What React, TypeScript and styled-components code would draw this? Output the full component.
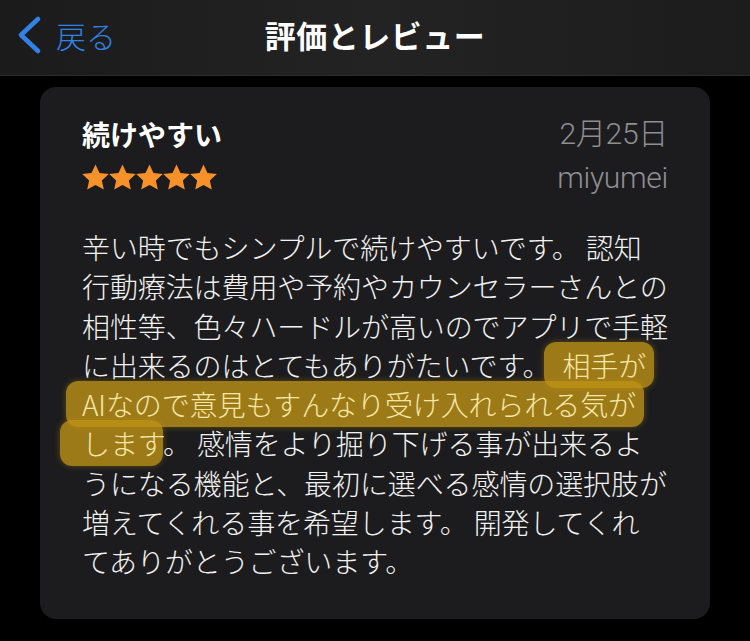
import styled, { createGlobalStyle } from 'styled-components';
import { ReactElement } from 'react';

const GlobalStyle = createGlobalStyle`
  html, body {
    margin: 0;
    padding: 0;
    background: #000;
  }
  body {
    font-family: 'Noto Sans CJK JP', 'Noto Sans', sans-serif;
    -webkit-font-smoothing: antialiased;
  }
`;

const Screen = styled.div`
  width: 750px;
  height: 641px;
  background: #000;
  overflow: hidden;
`;

const NavBar = styled.header`
  height: 76px;
  display: grid;
  grid-template-columns: 1fr auto 1fr;
  align-items: center;
  padding: 0 16px 0 16px;
  background: linear-gradient(90deg, #1b1b1b 0%, #232323 50%, #1c1c1c 100%);
  border-bottom: 1px solid #2b2b2b;
  box-sizing: border-box;
`;

const BackButton = styled.button`
  justify-self: start;
  display: flex;
  align-items: center;
  gap: 12px;
  background: none;
  border: 0;
  padding: 0;
  margin-top: -6px;
  color: #3182e6;
  font-family: inherit;
  font-size: 30px;
  font-weight: 300;
  cursor: pointer;
`;

const NavTitle = styled.h1`
  margin: -6px 0 0;
  color: #fff;
  font-size: 31px;
  font-weight: 700;
  letter-spacing: 0.5px;
`;

const Card = styled.article`
  margin: 11px 40px 0;
  height: 532px;
  box-sizing: border-box;
  padding: 28px 42px;
  background: #1c1c1e;
  border-radius: 16px;
`;

const CardHead = styled.div`
  display: flex;
  justify-content: space-between;
`;

const Column = styled.div<{ $align?: 'start' | 'end' }>`
  display: flex;
  flex-direction: column;
  align-items: ${({ $align }) => ($align === 'end' ? 'flex-end' : 'flex-start')};
`;

const ReviewTitle = styled.h2`
  margin: 0;
  line-height: 38px;
  font-size: 28px;
  font-weight: 700;
  color: #fff;
`;

const Stars = styled.div`
  display: flex;
  margin-top: 11px;
  height: 26px;
`;

const Meta = styled.span<{ $gap?: number }>`
  line-height: 38px;
  margin-top: ${({ $gap }) => $gap ?? 0}px;
  font-family: 'Roboto', 'Noto Sans CJK JP', sans-serif;
  font-size: 30px;
  font-weight: 300;
  letter-spacing: -0.3px;
  color: #8e8e93;
`;

const Body = styled.div`
  margin-top: 31px;
  color: #f2f2f2;
  font-size: 28px;
  font-weight: 300;
  line-height: 39.25px;
  letter-spacing: -0.1px;
`;

const Line = styled.div`
  white-space: nowrap;
`;

const Mark = styled.span<{ $padL: number; $padR: number }>`
  background: rgba(190, 146, 22, 0.8);
  color: #f6e7a6;
  border-radius: 12px;
  padding: 3px ${({ $padR }) => $padR}px 3px ${({ $padL }) => $padL}px;
  margin: 0 ${({ $padR }) => -$padR}px 0 ${({ $padL }) => -$padL}px;
  box-shadow: 0 0 6px rgba(190, 146, 22, 0.4);
`;

const Gap = styled.span<{ $w: number }>`
  display: inline-block;
  width: ${({ $w }) => $w}px;
`;

function Star(): ReactElement {
  return (
    <svg width="27" height="26" viewBox="1.6 1.6 20.8 19.8">
      <path
        d="M12 1.8l3.05 6.6 7.2.8-5.35 4.9 1.5 7.1L12 17.6l-6.4 3.6 1.5-7.1L1.75 9.2l7.2-.8z"
        fill="#f7922b"
      />
    </svg>
  );
}

function Chevron(): ReactElement {
  return (
    <svg width="28" height="40" viewBox="0 0 28 40">
      <path
        d="M22 4L5 20l17 16"
        fill="none"
        stroke="#3182e6"
        strokeWidth="4.6"
        strokeLinecap="round"
        strokeLinejoin="round"
      />
    </svg>
  );
}

export default function App(): ReactElement {
  return (
    <Screen>
      <GlobalStyle />
      <NavBar>
        <BackButton>
          <Chevron />
          戻る
        </BackButton>
        <NavTitle>評価とレビュー</NavTitle>
        <span />
      </NavBar>
      <Card>
        <CardHead>
          <Column>
            <ReviewTitle>続けやすい</ReviewTitle>
            <Stars>
              {[0, 1, 2, 3, 4].map((i) => (
                <Star key={i} />
              ))}
            </Stars>
          </Column>
          <Column $align="end">
            <Meta>2月25日</Meta>
            <Meta $gap={6}>miyumei</Meta>
          </Column>
        </CardHead>
        <Body>
          <Line>辛い時でもシンプルで続けやすいです。 認知</Line>
          <Line>行動療法は費用や予約やカウンセラーさんとの</Line>
          <Line>相性等、色々ハードルが高いのでアプリで手軽</Line>
          <Line>
            に出来るのはとてもありがたいです。<Gap $w={12} />
            <Mark $padL={18} $padR={8}>相手が</Mark>
          </Line>
          <Line>
            <Mark $padL={16} $padR={8}>AIなので意見もすんなり受け入れられる気が</Mark>
          </Line>
          <Line>
            <Mark $padL={22} $padR={0}>します</Mark>。 感情をより掘り下げる事が出来るよ
          </Line>
          <Line>うになる機能と、最初に選べる感情の選択肢が</Line>
          <Line>増えてくれる事を希望します。 開発してくれ</Line>
          <Line>てありがとうございます。</Line>
        </Body>
      </Card>
    </Screen>
  );
}
